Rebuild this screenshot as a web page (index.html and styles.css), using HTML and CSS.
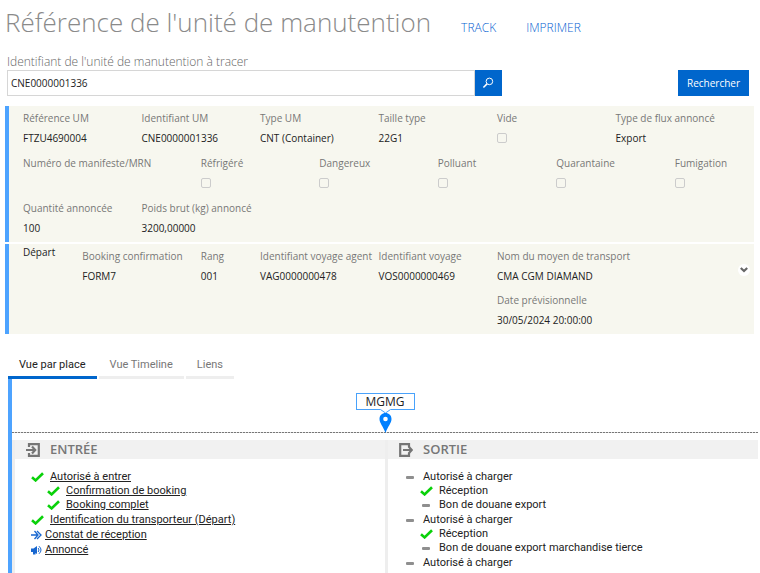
FILE: index.html
```
<!DOCTYPE html>
<html lang="fr">
<head>
<meta charset="utf-8">
<title>Référence de l'unité de manutention</title>
<meta name="viewport" content="width=device-width, initial-scale=1">
<link rel="stylesheet" href="styles.css">
</head>
<body>
<svg class="sprite" aria-hidden="true">
  <symbol id="check" viewBox="0 0 13 10"><path d="M1 5.2 L4.6 8.4 L12 1.2" fill="none" stroke="#0ad10a" stroke-width="2.6"/></symbol>
  <symbol id="dash" viewBox="0 0 8 3"><rect width="8" height="3" rx="1" fill="#8f8f8f"/></symbol>
</svg>

<header class="top">
  <h1>Référence de l'unité de manutention</h1>
  <nav>
    <a href="#">TRACK</a>
    <a href="#">IMPRIMER</a>
  </nav>
</header>

<form class="search">
  <label for="um">Identifiant de l'unité de manutention à tracer</label>
  <div class="searchrow">
    <div class="searchbox">
      <input type="text" id="um" value="CNE0000001336">
      <button type="button" class="lookup" aria-label="Chercher">
        <svg width="12" height="12" viewBox="0 0 12 12" fill="none" stroke="#fff"><circle cx="7.4" cy="4.4" r="3.3" stroke-width="1"/><path d="M5 6.9 L1.4 10.5" stroke-width="1.5"/></svg>
      </button>
    </div>
    <button type="submit" class="submit">Rechercher</button>
  </div>
</form>

<section class="card">
  <div class="grid">
    <div class="field"><span class="label">Référence UM</span><span>FTZU4690004</span></div>
    <div class="field"><span class="label">Identifiant UM</span><span>CNE0000001336</span></div>
    <div class="field"><span class="label">Type UM</span><span>CNT (Container)</span></div>
    <div class="field"><span class="label">Taille type</span><span>22G1</span></div>
    <div class="field"><label class="label" for="vide">Vide</label><input type="checkbox" id="vide" disabled></div>
    <div class="field"><span class="label">Type de flux annoncé</span><span>Export</span></div>

    <div class="field w3"><span class="label">Numéro de manifeste/MRN</span></div>
    <div class="field"><label class="label" for="refrigere">Réfrigéré</label><input type="checkbox" id="refrigere" disabled></div>
    <div class="field"><label class="label" for="dangereux">Dangereux</label><input type="checkbox" id="dangereux" disabled></div>
    <div class="field"><label class="label" for="polluant">Polluant</label><input type="checkbox" id="polluant" disabled></div>
    <div class="field"><label class="label" for="quarantaine">Quarantaine</label><input type="checkbox" id="quarantaine" disabled></div>
    <div class="field w1"><label class="label" for="fumigation">Fumigation</label><input type="checkbox" id="fumigation" disabled></div>

    <div class="field"><span class="label">Quantité annoncée</span><span>100</span></div>
    <div class="field"><span class="label">Poids brut (kg) annoncé</span><span>3200,00000</span></div>
  </div>
</section>

<section class="card">
  <div class="grid depart">
    <h2 class="w1">Départ</h2>
    <div class="field"><span class="label">Booking confirmation</span><span>FORM7</span></div>
    <div class="field w1"><span class="label">Rang</span><span>001</span></div>
    <div class="field"><span class="label">Identifiant voyage agent</span><span>VAG0000000478</span></div>
    <div class="field"><span class="label">Identifiant voyage</span><span>VOS0000000469</span></div>
    <div class="stack w4">
      <div class="field"><span class="label">Nom du moyen de transport</span><span>CMA CGM DIAMAND</span></div>
      <div class="field"><span class="label">Date prévisionnelle</span><span>30/05/2024 20:00:00</span></div>
    </div>
  </div>
  <button type="button" class="expand" aria-label="Déplier">
    <svg width="8" height="6" viewBox="0 0 8 6"><path d="M0.8 1 L4 4 L7.2 1" fill="none" stroke="#666" stroke-width="2.2"/></svg>
  </button>
</section>

<div class="tabs" role="tablist">
  <button type="button" role="tab" class="active" aria-selected="true">Vue par place</button>
  <button type="button" role="tab">Vue Timeline</button>
  <button type="button" role="tab">Liens</button>
</div>

<main class="place">
  <!-- Place marker on the route line -->
  <div class="route">
    <div class="marker">
      <span class="tag">MGMG</span>
      <svg width="59" height="24" viewBox="0 0 59 24">
        <path d="M0 .5 H24.5 L29.5 4 L34.5 .5 H59" fill="none" stroke="#49a2fb"/>
        <path d="M29.5 4 C26 4 23.5 6.5 23.5 10 C23.5 14 27 17 29.5 24 C32 17 35.5 14 35.5 10 C35.5 6.5 33 4 29.5 4 Z" fill="#0080ff"/>
        <circle cx="29.5" cy="10" r="2.3" fill="#fff"/>
      </svg>
    </div>
  </div>

  <div class="columns">
    <section class="column">
      <h3>
        <svg width="14" height="14" viewBox="0 0 14 14" fill="none" stroke="#757575" stroke-width="2.2"><path d="M3 4 V1.2 H12.8 V12.8 H3 V10"/><path d="M0 7 H9 M6 3.6 L9.2 7 L6 10.4"/></svg>
        ENTRÉE
      </h3>
      <ul class="steps">
        <li><div class="step"><svg class="check"><use href="#check"/></svg><a href="#">Autorisé à entrer</a></div>
          <ul>
            <li class="step"><svg class="check"><use href="#check"/></svg><a href="#">Confirmation de booking</a></li>
            <li class="step"><svg class="check"><use href="#check"/></svg><a href="#">Booking complet</a></li>
          </ul>
        </li>
        <li class="step"><svg class="check"><use href="#check"/></svg><a href="#">Identification du transporteur (Départ)</a></li>
        <li class="step event"><svg width="11" height="10" viewBox="0 0 11 10" fill="none" stroke="#1766cf" stroke-width="1.3"><path d="M0 5 H6 M3.5 1 L7 5 L3.5 9 M6 1 L10 5 L6 9"/></svg><a href="#">Constat de réception</a></li>
        <li class="step event"><svg width="11" height="10" viewBox="0 0 11 10"><path d="M0 3.5 H2.5 L6 1 V9 L4.5 8 V9.5 H2 V7 H0 Z" fill="#1766cf"/><path d="M7.2 3 Q8.8 5 7.2 7 M8 1.2 Q12 5 8 8.8" fill="none" stroke="#1766cf"/></svg><a href="#">Annoncé</a></li>
      </ul>
    </section>

    <section class="column">
      <h3>
        <svg width="14" height="14" viewBox="0 0 14 14" fill="none" stroke="#757575" stroke-width="2.2"><path d="M10 4 V1.2 H1.2 V12.8 H10 V10"/><path d="M4 7 H13 M9.6 3.6 L12.8 7 L9.6 10.4"/></svg>
        SORTIE
      </h3>
      <ul class="steps">
        <li><div class="step"><svg class="dash"><use href="#dash"/></svg>Autorisé à charger</div>
          <ul>
            <li class="step"><svg class="check"><use href="#check"/></svg>Réception</li>
            <li class="step"><svg class="dash"><use href="#dash"/></svg>Bon de douane export</li>
          </ul>
        </li>
        <li><div class="step"><svg class="dash"><use href="#dash"/></svg>Autorisé à charger</div>
          <ul>
            <li class="step"><svg class="check"><use href="#check"/></svg>Réception</li>
            <li class="step"><svg class="dash"><use href="#dash"/></svg>Bon de douane export marchandise tierce</li>
          </ul>
        </li>
        <li class="step"><svg class="dash"><use href="#dash"/></svg>Autorisé à charger</li>
      </ul>
    </section>
  </div>
</main>
</body>
</html>
```

FILE: styles.css
```
* {
  box-sizing: border-box;
}

body {
  margin: 0;
  padding: 0 6px 0 5px;
  min-height: 100vh;
  display: flex;
  flex-direction: column;
  font: 10px/20px "Open Sans", "Noto Sans", sans-serif;
  color: #222;
  background: #fff;
}

h1, h2, h3, ul {
  margin: 0;
  padding: 0;
  font-weight: normal;
}

button, input {
  font: inherit;
  border: 0;
  border-radius: 0;
}

button {
  padding: 0;
  cursor: pointer;
}

svg {
  flex: none;
}

.sprite {
  position: absolute;
  width: 0;
  height: 0;
}

/* Header */
.top {
  display: flex;
  align-items: baseline;
  gap: 30px;
}

.top h1 {
  font-size: 26px;
  font-weight: 300;
  line-height: 44px;
  color: #8a8a8a;
}

.top nav {
  display: flex;
  gap: 30px;
}

.top a {
  font-size: 12px;
  font-weight: 300;
  color: #0a64d2;
  text-decoration: none;
}

/* Search */
.search {
  padding: 10px 5px 0 2px;
}

.search label {
  display: block;
  font-size: 12px;
  font-weight: 300;
  line-height: 16px;
  color: #666;
}

.searchrow {
  display: flex;
  justify-content: space-between;
  height: 26px;
}

.searchbox {
  display: flex;
  width: calc(200% / 3);
}

.searchbox input {
  flex: 1;
  min-width: 0;
  padding: 0 3px;
  border: 1px solid #d6d6d6;
  color: #222;
}

.lookup {
  display: flex;
  align-items: center;
  justify-content: center;
  width: 27px;
  background: #06c;
}

.submit {
  width: 71px;
  background: #06c;
  color: #fff;
}

/* Detail cards */
.card {
  position: relative;
  margin-bottom: 2px;
  padding: 2px 20px 4px 14px;
  border-left: 4px solid #4da3ff;
  background: #f7f7ef;
}

.search + .card {
  margin-top: 10px;
}

.grid {
  display: grid;
  grid-template-columns: repeat(12, 1fr);
  row-gap: 5px;
}

.field {
  grid-column: span 2;
  display: flex;
  flex-direction: column;
  min-width: 0;
  white-space: nowrap;
}

.w1 {
  grid-column: span 1;
}

.w3 {
  grid-column: span 3;
}

.w4 {
  grid-column: span 4;
}

.label {
  color: #777;
}

.field input {
  appearance: none;
  width: 10px;
  height: 10px;
  margin: 5px 0;
  border: 1px solid #ccc;
  border-radius: 2px;
}

.depart h2 {
  font-size: 10px;
  line-height: 12px;
}

.stack {
  display: flex;
  flex-direction: column;
  gap: 4px;
}

.expand {
  position: absolute;
  right: 4px;
  top: 20px;
  display: flex;
  align-items: center;
  justify-content: center;
  width: 12px;
  height: 12px;
  border-radius: 50%;
  background: #fff;
}

/* Tabs */
.tabs {
  display: flex;
  gap: 2px;
  margin: 18px 0 0 3px;
}

.tabs button {
  padding: 0 11px;
  border-bottom: 3px solid #eee;
  background: none;
  font-family: Roboto, sans-serif;
  font-size: 11px;
  line-height: 22px;
  color: #777;
}

.tabs .active {
  border-color: #06c;
  color: #222;
}

/* Place view */
.place {
  flex: 1;
  display: flex;
  flex-direction: column;
  margin: 0 -4px 0 3px;
  border-left: 4px solid #4da3ff;
}

.route {
  display: flex;
  justify-content: center;
  height: 54px;
  padding-top: 14px;
  background: repeating-linear-gradient(90deg, #777 0 2px, #ddd 2px 3px) bottom / 100% 1px no-repeat;
}

.marker {
  display: flex;
  flex-direction: column;
  width: 59px;
}

.tag {
  height: 16px;
  border: 1px solid #49a2fb;
  border-bottom: 0;
  font-size: 12px;
  line-height: 15px;
  text-align: center;
}

.columns {
  flex: 1;
  display: grid;
  grid-template-columns: 1fr 1fr;
  margin-top: 7px;
}

.column {
  border-left: 3px solid #eee;
}

.column h3 {
  display: flex;
  align-items: center;
  gap: 10px;
  padding-left: 11px;
  background: #f1f1f1;
  font-size: 13px;
  font-weight: 600;
  line-height: 19px;
  color: #777;
}

.steps {
  padding: 11px 0 0 16px;
  font-family: Roboto, sans-serif;
  font-size: 11px;
  line-height: 14px;
  list-style: none;
}

.steps > li {
  margin-bottom: 1px;
}

.steps ul {
  padding-left: 16px;
  list-style: none;
}

.step {
  display: flex;
  align-items: center;
  gap: 6px;
  white-space: nowrap;
}

.step a {
  color: #222;
}

.check {
  width: 13px;
  height: 10px;
}

.dash {
  width: 8px;
  height: 3px;
  margin: 0 3px 0 2px;
}

.event {
  gap: 3px;
}
```
